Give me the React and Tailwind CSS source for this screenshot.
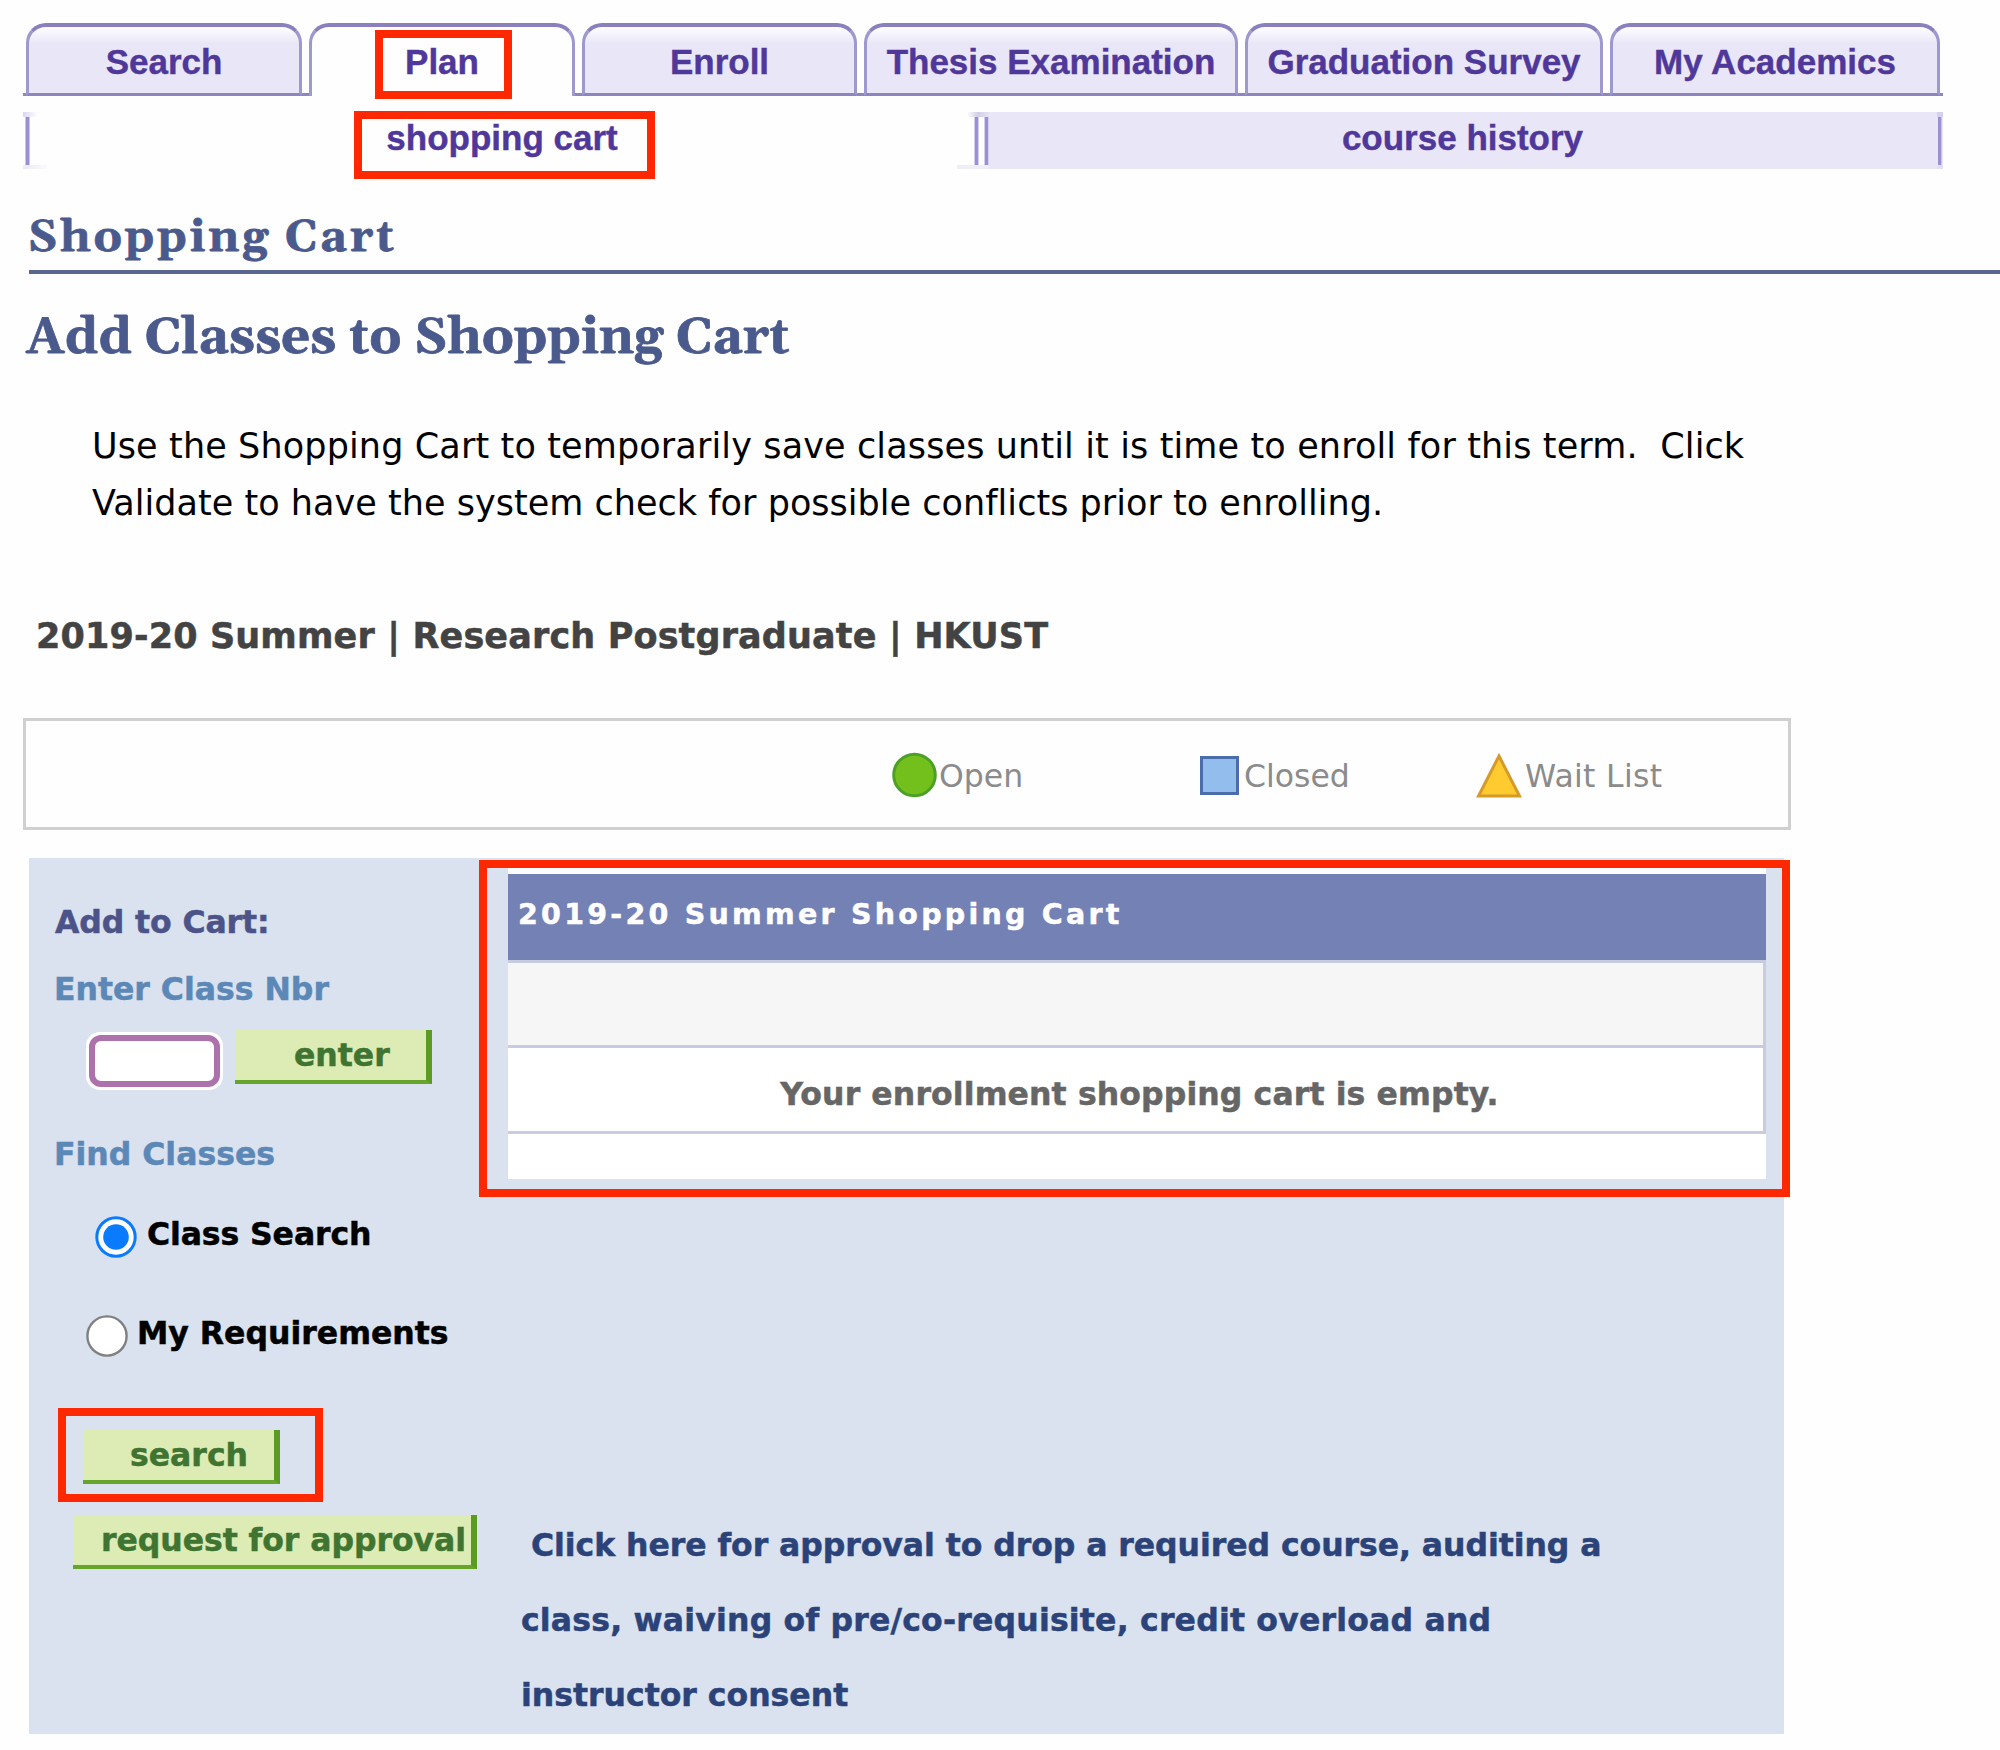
const tabs = [
  { label: "Search", width: "w-[276px]", gap: "w-[7px]" },
  { label: "Plan", width: "w-[266px]", gap: "w-[7px]", active: true },
  { label: "Enroll", width: "w-[275px]", gap: "w-[7px]" },
  { label: "Thesis Examination", width: "w-[374px]", gap: "w-[7px]" },
  { label: "Graduation Survey", width: "w-[358px]", gap: "w-[7px]" },
  { label: "My Academics", width: "w-[330px]", gap: "w-[3px]" },
];

function Highlight({ className }) {
  return (
    <span className={`pointer-events-none absolute border-[8px] border-[#ff2800] ${className}`} />
  );
}

function Tab({ label, width, gap, active }) {
  return (
    <>
      <div
        className={`relative flex shrink-0 items-center justify-center rounded-t-[20px] border-x-[3px] border-t-[4px] border-x-[#9d98cf] border-t-[#8b80bd] pt-[3px] ${width} ${
          active
            ? "bg-[#fefefe] pb-[3px]"
            : "border-b-[3px] border-b-[#8e84c0] bg-linear-to-b from-[#fdfdff] to-[#e9e7f7] to-25%"
        }`}
      >
        {label}
        {active && <Highlight className="top-[3px] left-[63px] h-[69px] w-[137px]" />}
      </div>
      <div className={`shrink-0 border-b-[3px] border-[#8e84c0] ${gap}`} />
    </>
  );
}

function TabBar() {
  return (
    <nav className="flex h-[73px] text-[35px] leading-[40px] font-bold text-[#50379a] [-webkit-text-stroke:0.4px]">
      <div className="w-[3px] shrink-0 border-b-[3px] border-[#8e84c0]" />
      {tabs.map((t) => (
        <Tab key={t.label} {...t} />
      ))}
    </nav>
  );
}

function SubTabBar() {
  return (
    <nav className="mt-[16px] flex h-[57px] text-[35px] leading-[40px] font-bold text-[#50379a] [-webkit-text-stroke:0.4px]">
      <div className="flex w-[14px] flex-col">
        <div className="h-[5px] bg-linear-to-r from-[#dcd6f1] to-[#fefefe]" />
        <div className="ml-[2px] w-[5px] grow border-x border-[#c9c4e8] bg-[#9a90d2]" />
        <div className="h-[4px] w-[24px] bg-linear-to-r from-[#eceaf3] to-[#fafafc]" />
      </div>
      <div className="relative flex w-[930px] items-center justify-center pb-[5px]">
        shopping cart
        <Highlight className="top-[-1px] left-[317px] h-[68px] w-[301px]" />
      </div>
      <div className="flex w-[22px] flex-col bg-linear-to-r from-[#fefefe] from-80% to-[#e9e7f7] to-80%">
        <div className="h-[5px] bg-linear-to-r from-[#fefefe] via-[#d3cee6] to-[#e5e2f4]" />
        <div className="flex grow justify-between pl-[7px]">
          <div className="w-[5px] border-x border-[#d3cfec] bg-[#9a90d2]" />
          <div className="w-[5px] border-x border-[#d3cfec] bg-[#9a90d2]" />
        </div>
        <div className="-ml-[10px] h-[4px] bg-[#efedf6]" />
      </div>
      <div className="flex w-[948px] items-center justify-center bg-[#e9e7f7] pr-[1px] pb-[5px]">
        course history
      </div>
      <div className="flex w-[6px] flex-col bg-[#e9e7f7]">
        <div className="h-[5px] bg-[#d6cfee]" />
        <div className="ml-px w-[4px] grow border-r border-[#c9c4e8] bg-[#9a90d2]" />
        <div className="h-[4px] bg-[#e2dff0]" />
      </div>
    </nav>
  );
}

function Legend() {
  return (
    <section className="mt-[57px] flex h-[112px] w-[1768px] items-center border-[3px] border-[#d0d0d0] pt-[3px] text-[31.5px] leading-[40px] text-[#8b8b8b]">
      <div className="ml-[866px] flex w-[308px] items-center gap-[2px]">
        <svg width="45" height="46" viewBox="0 0 45 46">
          <circle cx="22.5" cy="23" r="20.8" fill="#73c01c" stroke="#4c9f27" strokeWidth="3" />
        </svg>
        <span className="pt-[1px]">Open</span>
      </div>
      <div className="flex w-[276px] items-center gap-[5px]">
        <svg width="39" height="39" viewBox="0 0 39 39">
          <rect x="1.5" y="1.5" width="36" height="36" fill="#92bdec" stroke="#4c6dab" strokeWidth="3" />
        </svg>
        <span className="pt-[1px]">Closed</span>
      </div>
      <div className="flex items-center gap-[3px]">
        <svg width="46" height="46" viewBox="0 0 46 46">
          <path d="M23 4 L43.5 44 H2.5 Z" fill="#ffcb2e" stroke="#d69a2b" strokeWidth="3" />
        </svg>
        <span className="pt-[1px] tracking-[0.3px]">Wait List</span>
      </div>
    </section>
  );
}

function GreenButton({ children, className }) {
  return (
    <button
      className={`border-r-[6px] border-b-[4px] border-r-[#5b9b22] border-b-[#66a52b] bg-[#ddecb5] text-left font-bold text-[#3f7431] ${className}`}
    >
      {children}
    </button>
  );
}

function AddToCart() {
  return (
    <div className="flex w-[450px] shrink-0 flex-col items-start pt-[44px]">
      <h3 className="ml-[26px] tracking-[-0.1px] text-[#4b5389]">Add to Cart:</h3>
      <h4 className="mt-[27px] ml-[25px] text-[#5c88b8]">Enter Class Nbr</h4>
      <div className="mt-[21px] ml-[57px] flex h-[60px] items-start">
        <div className="mt-[2px] h-[58px] w-[137px] rounded-[14px] bg-white p-[3px]">
          <input className="block h-[52px] w-[131px] rounded-[12px] border-[6px] border-[#ad71ac] bg-white" />
        </div>
        <GreenButton className="ml-[12px] h-[54px] w-[197px] pl-[59px]">enter</GreenButton>
      </div>
      <h4 className="mt-[44px] ml-[25px] text-[#5c88b8]">Find Classes</h4>
      <label className="mt-[40px] ml-[66px] flex h-[44px] items-end text-black">
        <svg width="42" height="42" viewBox="0 0 42 42">
          <circle cx="21" cy="21" r="19.2" fill="white" stroke="#0a7aff" strokeWidth="3" />
          <circle cx="21" cy="21" r="12.8" fill="#0a7aff" />
        </svg>
        <span className="mb-[4px] ml-[10px] tracking-[-0.1px]">Class Search</span>
      </label>
      <label className="mt-[55px] ml-[57px] flex h-[44px] items-end text-black">
        <svg width="42" height="42" viewBox="0 0 42 42">
          <circle cx="21" cy="21" r="19.6" fill="white" stroke="#808080" strokeWidth="2.4" />
        </svg>
        <span className="mb-[4px] ml-[9px]">My Requirements</span>
      </label>
      <div className="mt-[51px] ml-[29px] h-[94px] w-[265px] border-[8px] border-[#ff2800] pt-[14px] pl-[17px]">
        <GreenButton className="h-[54px] w-[197px] pl-[47px]">search</GreenButton>
      </div>
    </div>
  );
}

function CartTable() {
  return (
    <div className="mt-[2px] h-[337px] w-[1311px] shrink-0 border-[8px] border-[#ff2800] pl-[21px]">
      <div className="flex w-[1258px] flex-col bg-white pt-[6px]">
        <div className="h-[86px] bg-[#7481b5] pt-[21px] pl-[10px] text-[28.5px] tracking-[3.25px] text-white">
          2019-20 Summer Shopping Cart
        </div>
        <div className="h-[88px] border-t-[3px] border-r-[3px] border-b-[3px] border-[#c8cce1] bg-[#f6f6f6]" />
        <div className="flex h-[86px] items-center justify-center border-r-[3px] border-b-[3px] border-[#c8cce1] pt-[10px] pl-[8px] tracking-[0.12px] text-[#666666]">
          Your enrollment shopping cart is empty.
        </div>
        <div className="h-[45px]" />
      </div>
    </div>
  );
}

export default function App() {
  return (
    <main className="flex h-[1750px] w-[2000px] flex-col overflow-hidden bg-[#fefefe] pt-[23px] pl-[23px] font-['Liberation_Sans',Arial,sans-serif]">
      <TabBar />
      <SubTabBar />
      <header className="ml-[6px] h-[105px] border-b-[4px] border-[#5a6692] pt-[41px]">
        <h1 className="-ml-px font-['Gelasio','DejaVu_Serif_Condensed',serif] text-[45px] leading-[56px] font-bold tracking-[2.8px] text-[#4b5a8c] [-webkit-text-stroke:0.8px]">
          Shopping Cart
        </h1>
      </header>
      <h2 className="mt-[34px] ml-[3px] font-['Gelasio','DejaVu_Serif_Condensed',serif] text-[50.8px] leading-[60px] font-bold text-[#4b5a8c] [-webkit-text-stroke:0.8px]">
        Add Classes to Shopping Cart
      </h2>
      <div className="font-['DejaVu_Sans',Verdana,sans-serif]">
        <p className="mt-[50px] ml-[69px] w-[1700px] text-[35px] leading-[57.3px] text-black">
          <span className="tracking-[0.13px]">
            Use the Shopping Cart to temporarily save classes until it is time to enroll for this term.&nbsp; Click
          </span>
          <br />
          <span className="tracking-[0.03px]">
            Validate to have the system check for possible conflicts prior to enrolling.
          </span>
        </p>
        <p className="mt-[78px] ml-[13px] text-[35px] leading-[50px] font-bold tracking-[0.14px] text-[#434343] [-webkit-text-stroke:0.5px]">
          2019-20 Summer | Research Postgraduate | HKUST
        </p>
        <Legend />
        <section className="mt-[28px] ml-[6px] flex h-[876px] w-[1755px] flex-col bg-[#d9e2ee] text-[31.5px] leading-[40px] font-bold [-webkit-text-stroke:0.5px]">
          <div className="flex h-[644px]">
            <AddToCart />
            <CartTable />
          </div>
          <div className="flex items-start">
            <GreenButton className="mt-[13px] ml-[44px] h-[54px] w-[404px] pt-[1px] pl-[28px] tracking-[-0.05px] whitespace-nowrap">
              request for approval
            </GreenButton>
            <p className="mt-[6px] ml-[44px] w-[1150px] indent-[10px] leading-[75px] text-[#2b4379]">
              <span className="tracking-[-0.05px]">
                Click here for approval to drop a required course, auditing a
              </span>
              <br />
              <span className="tracking-[0.2px]">class, waiving of pre/co-requisite, credit overload and</span>
              <br />
              instructor consent
            </p>
          </div>
        </section>
      </div>
    </main>
  );
}
